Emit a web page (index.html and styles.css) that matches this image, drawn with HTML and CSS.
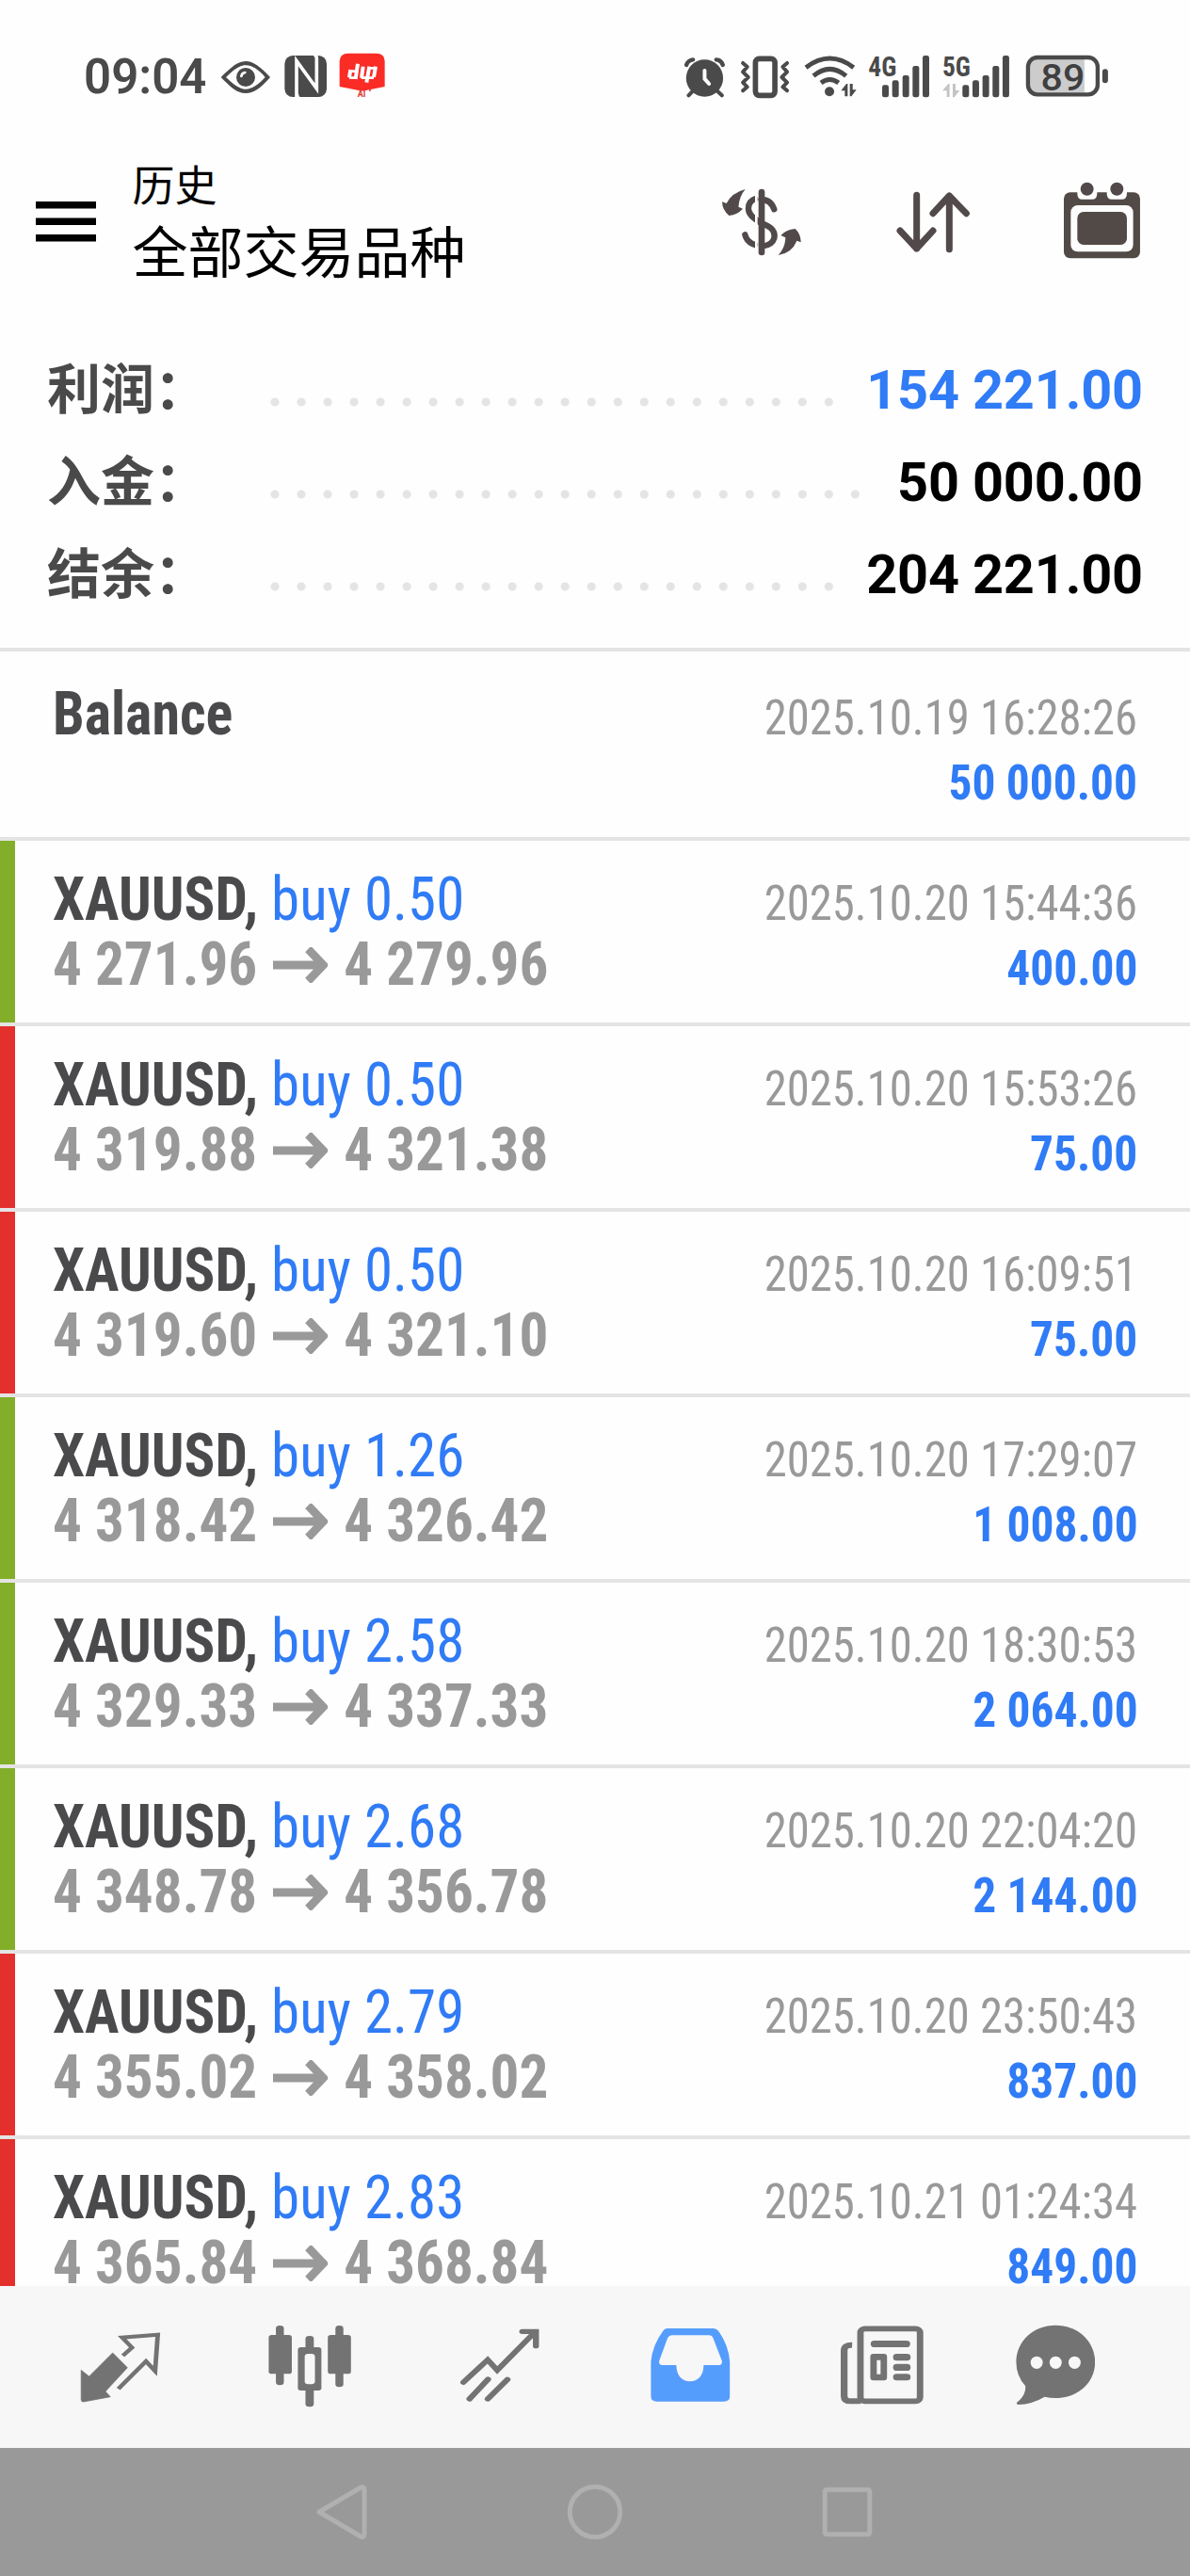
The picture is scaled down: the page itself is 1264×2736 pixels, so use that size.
FILE: index.html
```
<!DOCTYPE html>
<html lang="zh-CN">
<head>
<meta charset="utf-8">
<title>历史</title>
<link rel="stylesheet" href="styles.css">
</head>
<body>
<div class="screen">
  <div class="status">
    <span class="time">09:04</span>
    <svg class="status-left" viewBox="520 75 540 150">
      <path fill="#4a4a4a" fill-rule="evenodd" d="M525 156C560 122 580 105 604 105S650 122 682 156C650 192 630 207 604 207S560 192 525 156ZM541 156C565 180 585 194 604 194S645 180 666 156C645 132 625 118 604 118S565 132 541 156Z"/>
      <circle cx="604" cy="156" r="30" fill="#4a4a4a"/>
      <path d="M590 153a14 14 0 0 1 12-12" fill="none" stroke="#fdfdfd" stroke-width="8" stroke-linecap="round"/>
      <rect x="728" y="87" width="134" height="132" rx="26" fill="#4a4a4a"/>
      <path d="M766 222V104L830 192V95Q830 87 822 84M772 222Q766 214 766 205" fill="none" stroke="#fdfdfd" stroke-width="11"/>
      <path d="M903 104Q905 80 930 80H1020Q1046 80 1047 104V186L976 200L903 186Z" fill="#fb2c26"/>
      <path d="M938 132L934 157M961 113L954 162M978 122L973 158M998 122L989 173M1018 122L1012 156" fill="none" stroke="#fff" stroke-width="12"/>
      <path d="M936 137H956M934 158H956M972 158H990M996 127H1016M992 158H1012" fill="none" stroke="#fff" stroke-width="8"/>
      <text class="badge-ai" x="960" y="220">AI</text>
      <circle cx="1000" cy="198" r="3" fill="#c33a50"/>
    </svg>
    <svg class="status-right" viewBox="75 50 1365 205">
      <g fill="none" stroke="#4a4a4a" stroke-linecap="round">
        <g stroke-width="12"><path d="M87 116Q92 101 108 99M203 116Q198 101 182 99" stroke-width="13"/><path d="M108 198L94 213M184 198L200 213"/></g>
        <circle cx="145" cy="158" r="59" fill="#4a4a4a" stroke="none"/>
        <path d="M145 134V160L159 176" stroke="#fdfdfd" stroke-width="12"/>
        <rect x="307" y="96" width="62" height="117" rx="12" stroke-width="17"/>
        <path d="M267 110L281 122L267 138L284 155L267 172L281 186L267 198M408 110L394 122L408 138L391 155L408 172L394 186L408 198" stroke-width="12" stroke-linejoin="round"/>
        <g stroke-width="15" stroke-linecap="butt"><path d="M468 124Q544 66 620 124"/><path d="M492 151Q544 107 596 151"/><path d="M516 173Q544 152 572 173"/></g>
      </g>
      <g fill="#4a4a4a">
        <circle cx="543" cy="201" r="15"/>
        <path d="M580 198L597 176H601V216H592V198ZM629 195L613 216H608V176H617V195Z"/>
        <path fill="#c4c4c4" d="M903 198L922 176H926V218H917V198ZM958 197L941 219H936V176H945V197Z"/>
        <rect x="711" y="180" width="21" height="39" rx="7"/><rect x="743" y="165" width="21" height="54" rx="7"/><rect x="776" y="149" width="21" height="70" rx="7"/><rect x="808" y="119" width="21" height="100" rx="7"/><rect x="840" y="86" width="21" height="133" rx="7"/>
        <rect x="967" y="180" width="21" height="39" rx="7"/><rect x="999" y="165" width="21" height="54" rx="7"/><rect x="1031" y="149" width="21" height="70" rx="7"/><rect x="1063" y="119" width="21" height="100" rx="7"/><rect x="1095" y="86" width="21" height="133" rx="7"/>
        <rect x="1413" y="129" width="18" height="45" rx="9"/>
      </g>
      <path d="M1196 98H1356V204H1196Q1180 204 1180 190V112Q1180 98 1196 98Z" fill="#ccc"/>
      <rect x="1176" y="92" width="222" height="118" rx="30" fill="none" stroke="#4a4a4a" stroke-width="13"/>
      <text class="net" x="667" y="151" textLength="90" lengthAdjust="spacingAndGlyphs">4G</text>
      <text class="net" x="903" y="151" textLength="90" lengthAdjust="spacingAndGlyphs">5G</text>
      <text class="level" x="1217" y="196" textLength="140" lengthAdjust="spacingAndGlyphs">89</text>
    </svg>
  </div>

  <header class="header">
    <svg class="menu" viewBox="0 0 64 43"><path d="M0 0H64V7.5H0ZM0 17.5H64V25H0ZM0 35H64V42.5H0Z"/></svg>
    <div class="titles">
      <div class="title">历史</div>
      <div class="subtitle">全部交易品种</div>
    </div>
    <svg class="ic-currency" viewBox="78 72 258 246">
      <g fill="none" stroke="#524a4a" stroke-width="19" stroke-linecap="round">
        <path d="M247 157Q236 126 206 126M186 124Q164 132 165 156C166 176 184 186 206 202C232 211 248 220 248 242Q246 270 208 275M186 270Q160 262 154 238"/>
      </g>
      <path d="M190 90V300" stroke="#fdfdfd" stroke-width="8"/>
      <path d="M207 102V294" stroke="#524a4a" stroke-width="20" stroke-linecap="round"/>
      <path d="M155 93Q112 104 95 138L81 133Q82 160 103 177Q130 174 147 155L133 149Q136 115 155 93ZM260 303Q304 296 319 257L332 262Q332 236 314 219Q284 222 268 240L283 247Q282 280 260 303Z" fill="#524a4a"/>
    </svg>
    <svg class="ic-sort" viewBox="636 72 234 246">
      <path d="M701 112V282M648 225L701 282L753 225M805 284V114M753 170L805 114L859 170" fill="none" stroke="#524a4a" stroke-width="21" stroke-linecap="round" stroke-linejoin="round"/>
    </svg>
    <svg class="ic-calendar" viewBox="1172 70 244 246">
      <rect x="1172" y="104" width="243" height="210" rx="20" fill="#524a46"/>
      <path d="M1215 96V108Q1215 126 1230 126H1262Q1278 126 1278 108V96ZM1309 96V108Q1309 126 1325 126H1357Q1373 126 1373 108V96Z" fill="#fdfdfd"/>
      <rect x="1194" y="145" width="199" height="148" rx="22" fill="#fdfdfd"/>
      <rect x="1215" y="166" width="158" height="105" rx="20" fill="#524a46"/>
      <circle cx="1246" cy="93" r="21" fill="#524a4a"/><circle cx="1341" cy="93" r="21" fill="#524a4a"/>
    </svg>
  </header>

  <section class="summary">
    <div class="sum"><span class="label">利润：</span><span class="dots"></span><span class="value blue">154 221.00</span></div>
    <div class="sum"><span class="label">入金：</span><span class="dots"></span><span class="value">50 000.00</span></div>
    <div class="sum"><span class="label">结余：</span><span class="dots"></span><span class="value">204 221.00</span></div>
  </section>

  <main class="list" id="list">
    <article class="deal first">
      <div class="line"><span class="name">Balance</span><time class="date">2025.10.19 16:28:26</time></div>
      <div class="line"><span></span><span class="amount">50 000.00</span></div>
    </article>
  </main>

  <nav class="tabs">
    <svg viewBox="213 204 212 270" preserveAspectRatio="none" width="85.4"><path d="M216 352L237 372L299 297L338 344L280 420L293 437L222 453Q216 453 216 446Z" fill="#737373" stroke="#737373" stroke-width="2" stroke-linejoin="round"/><path d="M326 306L350 280L324 248L418 239L411 355L387 324L314 412" fill="none" stroke="#737373" stroke-width="12"/></svg>
    <svg viewBox="708 204 219 270" preserveAspectRatio="none" width="88.2"><g fill="#737373"><rect x="709" y="240" width="61" height="124" rx="8"/><rect x="728" y="210" width="21" height="190" rx="10"/><rect x="865" y="240" width="61" height="124" rx="8"/><rect x="885" y="210" width="21" height="196" rx="10"/><rect x="806" y="243" width="22" height="60" rx="10"/><rect x="806" y="400" width="22" height="69" rx="10"/><rect x="786" y="279" width="62" height="138" rx="8"/></g><rect x="804" y="300" width="27" height="97" rx="9" fill="#f7f7f7"/></svg>
    <svg viewBox="1215 204 208 270" preserveAspectRatio="none" width="83.9"><path d="M1223 391L1287 319L1312 352L1412 230M1378 229H1414V275M1239 444L1288 381M1287 444L1339 382" fill="none" stroke="#737373" stroke-width="16" stroke-linecap="round"/></svg>
    <svg viewBox="148 204 210 270" preserveAspectRatio="none" width="84.6"><path fill-rule="evenodd" fill="#559dfd" d="M192 219H313Q322 219 327 227Q354 272 357 325V436Q357 452 341 452H165Q149 452 149 436V325Q153 272 181 227Q184 219 192 219ZM205 241Q197 241 193 250L171 322Q169 336 179 336H216C216 370 232 388 252 388S288 370 288 336H328Q338 336 336 322L313 250Q310 241 302 241Z"/></svg>
    <svg viewBox="647 204 218 270" preserveAspectRatio="none" width="87.9"><g fill="none" stroke="#737373"><rect x="699" y="220" width="157" height="231" rx="12" stroke-width="17"/><path d="M677 272Q656 271 656 290V434Q656 451 673 451H700" stroke-width="18"/></g><g fill="#737373"><rect x="726" y="258" width="104" height="21" rx="10"/><path fill-rule="evenodd" d="M733 300H761Q769 300 769 309V376Q769 385 761 385H733Q725 385 725 376V309Q725 300 733 300ZM742 320V365H752V320Z"/><rect x="785" y="300" width="46" height="22" rx="10"/><rect x="785" y="332" width="46" height="22" rx="10"/><rect x="785" y="364" width="46" height="21" rx="10"/></g></svg>
    <svg viewBox="1108 204 210 270" preserveAspectRatio="none" width="84.6"><path fill="#737373" d="M1213 209C1272 209 1317 260 1317 326S1272 441 1213 441Q1198 441 1184 437Q1150 461 1115 462Q1107 461 1112 454Q1136 430 1133 402Q1109 370 1109 326C1109 260 1154 209 1213 209Z"/><g fill="#f7f7f7"><ellipse cx="1163" cy="328" rx="16" ry="20"/><ellipse cx="1213" cy="328" rx="16" ry="20"/><ellipse cx="1263" cy="328" rx="16" ry="20"/></g></svg>
  </nav>

  <div class="sysnav">
    <svg viewBox="0 0 60 60"><path d="M6 30L50 4Q54 2 54 7V53Q54 58 50 56Z"/></svg>
    <svg viewBox="0 0 60 60"><circle cx="30" cy="30" r="26.7"/></svg>
    <svg viewBox="0 0 60 60"><rect x="5.2" y="6.2" width="47.6" height="47.6" rx="2"/></svg>
  </div>
</div>
<script src="deals.js"></script>
</body>
</html>
```
FILE: styles.css
```
* { box-sizing: border-box; }
body { margin: 0; background: #fefefe; font-family: Roboto, "Noto Sans CJK SC", sans-serif; }
svg { display: block; flex: none; }
.screen { width: 1264px; height: 2736px; display: flex; flex-direction: column; overflow: hidden; }

.status { height: 150px; flex: none; display: flex; padding-left: 89px; color: #4a4a4a; }
.time { width: 144px; margin-top: 52px; font-size: 51px; line-height: 60px; font-weight: 600; }
.status-left { width: 180px; height: 50px; margin-top: 55px; }
.status-right { width: 455px; height: 68.3px; margin: 46.7px 0 0 312px; }
.badge-ai { font: 700 27px Roboto, sans-serif; fill: #d93832; }
.net { font: 700 88px "Roboto Condensed", Roboto, sans-serif; fill: #4a4a4a; }
.level { font: 500 118px Roboto, sans-serif; fill: #3f3f3f; }

.header { height: 170px; flex: none; display: flex; align-items: center; padding-left: 38px; }
.menu { width: 64px; height: 43px; }
.titles { width: 625px; margin: 0 0 4px 38.5px; color: #000; white-space: nowrap; font-family: "Noto Sans CJK SC", sans-serif; }
.title { font-size: 45px; line-height: 63px; }
.subtitle { font-size: 59px; line-height: 78px; }
.ic-currency { width: 86px; height: 82px; margin-right: 100px; }
.ic-sort { width: 78px; height: 82px; margin-right: 100.5px; }
.ic-calendar { width: 81.3px; height: 82px; margin-bottom: 3px; }

.summary { height: 368px; flex: none; padding: 40px 50px 0; }
.sum { height: 98px; display: flex; align-items: baseline; line-height: 98px; }
.label { width: 228px; font: 700 57px/98px "Noto Sans CJK SC", sans-serif; color: #4a4a4a; white-space: nowrap; }
.dots { flex: 1; align-self: center; height: 28px; margin: 36px 28px 0 0; background: radial-gradient(circle at 14px 14px, #e4e4e4 4px, transparent 5px) 0 0 / 28.03px 28px repeat-x; }
.value { font-size: 57.6px; font-weight: 700; letter-spacing: -.15px; color: #000; white-space: nowrap; }
.value.blue { color: #307bf6; }

.list { flex: 1; min-height: 0; overflow: hidden; }
.deal { height: 197px; padding: 28px 55.5px 0 55.5px; box-shadow: inset 0 -4px 0 #e4e4e4; position: relative; }
.deal.first { height: 205px; padding-top: 36px; box-shadow: inset 0 4px 0 #e4e4e4, inset 0 -4px 0 #e4e4e4; }
.deal.win::before, .deal.loss::before { content: ""; position: absolute; left: 0; top: 0; bottom: 4px; width: 16px; background: #83ae2a; }
.deal.loss::before { background: #e3302c; }
.line { height: 69px; display: flex; justify-content: space-between; align-items: baseline; font: 400 64px/69px "Roboto Condensed", Roboto, sans-serif; white-space: nowrap; }
.line::before { content: "\200b"; width: 0; }
.name { margin-right: auto; font-weight: 700; color: #4a4a4c; transform: scaleX(.938); transform-origin: left; }
.symbol, .prices { margin-right: auto; color: #307bf6; transform: scaleX(.952); transform-origin: left; }
.symbol b { font-weight: 700; color: #4a4a4c; }
.prices { font-weight: 700; color: #999; transform: scaleX(.955); }
.arrow { display: inline-block; width: 61.4px; height: 38px; margin: 0 17.5px; vertical-align: 2px; fill: none; stroke: #999; stroke-width: 9; }
.date { font-size: 52px; color: #999; transform: scaleX(.937); transform-origin: right; }
.amount { font-size: 52px; font-weight: 700; color: #307bf6; transform: scaleX(.95); transform-origin: right; }

.tabs { height: 172px; flex: none; display: grid; grid-template-columns: 200px 202px 202px 203px 203px 166px; padding: 40px 0 0 28.2px; justify-items: center; background: #f7f7f7; }
.tabs svg { height: 90px; }
.sysnav { height: 136px; flex: none; display: grid; grid-template-columns: repeat(3, 268.6px); justify-content: center; justify-items: center; align-items: center; background: #999; }
.sysnav svg { width: 60px; height: 60px; fill: none; stroke: #b0b0b0; stroke-width: 5; stroke-linejoin: round; }
```
FILE: deals.js
```
const deals = [
  ["win", "0.50", "4 271.96", "4 279.96", "2025.10.20 15:44:36", "400.00"],
  ["loss", "0.50", "4 319.88", "4 321.38", "2025.10.20 15:53:26", "75.00"],
  ["loss", "0.50", "4 319.60", "4 321.10", "2025.10.20 16:09:51", "75.00"],
  ["win", "1.26", "4 318.42", "4 326.42", "2025.10.20 17:29:07", "1 008.00"],
  ["win", "2.58", "4 329.33", "4 337.33", "2025.10.20 18:30:53", "2 064.00"],
  ["win", "2.68", "4 348.78", "4 356.78", "2025.10.20 22:04:20", "2 144.00"],
  ["loss", "2.79", "4 355.02", "4 358.02", "2025.10.20 23:50:43", "837.00"],
  ["loss", "2.83", "4 365.84", "4 368.84", "2025.10.21 01:24:34", "849.00"]
];
const arrow = '<svg class="arrow" viewBox="0 0 61.4 38" preserveAspectRatio="none"><path d="M0 19H56M39 2L56 19L39 36"/></svg>';
document.getElementById("list").insertAdjacentHTML("beforeend", deals.map(([kind, lots, open, close, date, amount]) => `
  <article class="deal ${kind}">
    <div class="line"><span class="symbol"><b>XAUUSD,</b> buy ${lots}</span><time class="date">${date}</time></div>
    <div class="line"><span class="prices">${open}${arrow}${close}</span><span class="amount">${amount}</span></div>
  </article>`).join(""));
```
